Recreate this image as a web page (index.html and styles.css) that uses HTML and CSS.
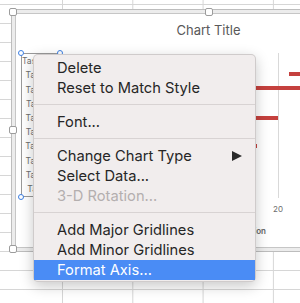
FILE: index.html
```html
<!DOCTYPE html>
<html lang="en">
<head>
  <meta charset="UTF-8">
  <meta name="viewport" content="width=device-width, initial-scale=1.0">
  <title>Chart context menu</title>
  <link rel="stylesheet" href="styles.css">
</head>
<body>
  <div class="sheet">
    <div class="chart">
      <span class="handle h-tl"></span>
      <span class="handle h-tm"></span>
      <span class="handle h-ml"></span>
      <span class="handle h-bl"></span>

      <div class="chart-body">
        <div class="chart-title">Chart Title</div>

        <div class="plot">
          <div class="axis-box">
            <span class="dot d-tl"></span>
            <span class="dot d-tr"></span>
            <span class="dot d-bl"></span>
            <div class="axis-label">Task 10</div>
            <div class="axis-label">Task 9</div>
            <div class="axis-label">Task 8</div>
            <div class="axis-label">Task 7</div>
            <div class="axis-label">Task 6</div>
            <div class="axis-label">Task 5</div>
            <div class="axis-label">Task 4</div>
            <div class="axis-label">Task 3</div>
            <div class="axis-label">Task 2</div>
            <div class="axis-label">Task 1</div>
          </div>

          <div class="gridline"></div>
          <div class="bar" style="top: 19px; left: 268px; width: 60px;"></div>
          <div class="bar" style="top: 33px; left: 200px; width: 120px;"></div>
          <div class="bar" style="top: 63px; left: 180px; width: 77px;"></div>
          <div class="bar" style="top: 91px; left: 200px; width: 36px;"></div>

          <div class="tick">20</div>
          <div class="axis-title">Duration</div>
        </div>
      </div>
    </div>

    <div class="menu">
      <div class="menu-item">Delete</div>
      <div class="menu-item">Reset to Match Style</div>
      <div class="menu-sep"></div>
      <div class="menu-item">Font...</div>
      <div class="menu-sep"></div>
      <div class="menu-item has-sub">Change Chart Type <span class="arrow"></span></div>
      <div class="menu-item">Select Data...</div>
      <div class="menu-item disabled">3-D Rotation...</div>
      <div class="menu-sep"></div>
      <div class="menu-item">Add Major Gridlines</div>
      <div class="menu-item">Add Minor Gridlines</div>
      <div class="menu-item active">Format Axis...</div>
    </div>
  </div>
</body>
</html>
```

FILE: styles.css
```css
body {
  margin: 0;
  font-family: Inter, 'Liberation Sans', Arial, sans-serif;
}

.sheet {
  position: relative;
  width: 300px;
  height: 303px;
  overflow: hidden;
  background-color: #fff;
  background-image:
    linear-gradient(to right, #d6d6d6 1px, transparent 1px),
    linear-gradient(to bottom, #d6d6d6 1px, transparent 1px);
  background-size: 70.3px 100%, 100% 19px;
  background-position: 62px 0, 0 4px;
  padding-top: 9px;
  box-sizing: border-box;
}

/* chart object */
.chart {
  position: relative;
  margin-left: 11px;
  width: 395px;
  height: 243px;
  border: 1px solid #bdbdbd;
  padding: 3px;
  background: #ececec;
  box-sizing: border-box;
}

.chart-body {
  height: 100%;
  border: 1px solid #c6c6c6;
  background: #fff;
  box-sizing: border-box;
  overflow: hidden;
}

.handle {
  position: absolute;
  width: 8px;
  height: 8px;
  background: #fff;
  border: 1px solid #9c9c9c;
  border-radius: 2px;
  box-sizing: border-box;
  transform: translate(-50%, -50%);
  z-index: 2;
}

.h-tl { left: 1px; top: 2px; }
.h-tm { left: 197px; top: 2px; }
.h-ml { left: 1px; top: 120px; }
.h-bl { left: 1px; top: 239px; }

.chart-title {
  margin-top: 8px;
  text-align: center;
  font-size: 13px;
  line-height: 16px;
  color: #595959;
}

.plot {
  position: relative;
  margin: 15px 0 0 5px;
  height: 190px;
}

.axis-box {
  position: relative;
  width: 39px;
  height: 144px;
  border: 1px solid #9a9a9a;
  box-sizing: border-box;
  display: flex;
  flex-direction: column;
}

.axis-label {
  flex: 1;
  display: flex;
  align-items: center;
  justify-content: flex-end;
  padding-right: 7px;
  font-size: 8.5px;
  color: #6e6e6e;
  white-space: nowrap;
}

.dot {
  position: absolute;
  width: 6px;
  height: 6px;
  border: 1px solid #3d7fe3;
  border-radius: 50%;
  background: #fff;
  box-sizing: border-box;
  transform: translate(-50%, -50%);
}

.d-tl { left: -1px; top: -1px; }
.d-tr { left: 38px; top: -1px; }
.d-bl { left: -1px; top: 143px; }

.gridline {
  position: absolute;
  left: 257px;
  top: 0;
  width: 1px;
  height: 145px;
  background: #d9d9d9;
}

.bar {
  position: absolute;
  height: 4px;
  background: #c5413e;
}

.tick {
  position: absolute;
  left: 249px;
  top: 150px;
  width: 16px;
  text-align: center;
  font-size: 8px;
  line-height: 12px;
  color: #6e6e6e;
}

.axis-title {
  position: absolute;
  left: 185px;
  top: 172px;
  width: 60px;
  text-align: right;
  font-size: 8px;
  line-height: 12px;
  font-weight: 600;
  color: #666;
}

/* context menu */
.menu {
  position: absolute;
  left: 33px;
  top: 54px;
  width: 223px;
  padding: 3px 0 1px;
  background: #f1eded;
  border: 1px solid rgba(0, 0, 0, 0.14);
  border-radius: 5px;
  box-shadow: 0 4px 14px rgba(0, 0, 0, 0.22);
  box-sizing: border-box;
  z-index: 5;
}

.menu-item {
  display: flex;
  align-items: center;
  height: 20px;
  padding: 0 13px 0 23px;
  font-size: 14.7px;
  color: #262626;
  white-space: nowrap;
}

.menu-item.disabled {
  color: #b4afaf;
}

.menu-item.active {
  background: #4a8cf5;
  color: #fff;
}

.has-sub {
  justify-content: space-between;
}

.arrow {
  width: 0;
  height: 0;
  border-left: 10px solid #2a2a2a;
  border-top: 5px solid transparent;
  border-bottom: 5px solid transparent;
}

.menu-sep {
  height: 1px;
  margin: 6px 0 7px;
  background: #d8d3d3;
}
```
